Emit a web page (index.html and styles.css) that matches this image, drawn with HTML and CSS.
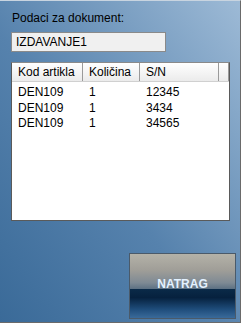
FILE: index.html
```html
<!doctype html>
<html lang="hr">
<head>
  <meta charset="utf-8">
  <title>Podaci za dokument</title>
  <link rel="stylesheet" href="styles.css">
</head>
<body>
  <div class="frame">
    <div class="screen">
      <p class="caption">Podaci za dokument:</p>
      <div class="docfield">IZDAVANJE1</div>
      <div class="list">
        <div class="list-head">
          <div class="col col-code">Kod artikla</div>
          <div class="col col-qty">Količina</div>
          <div class="col col-sn">S/N</div>
          <div class="col col-rest"></div>
        </div>
        <div class="list-row">
          <div class="col col-code">DEN109</div>
          <div class="col col-qty">1</div>
          <div class="col col-sn">12345</div>
        </div>
        <div class="list-row">
          <div class="col col-code">DEN109</div>
          <div class="col col-qty">1</div>
          <div class="col col-sn">3434</div>
        </div>
        <div class="list-row">
          <div class="col col-code">DEN109</div>
          <div class="col col-qty">1</div>
          <div class="col col-sn">34565</div>
        </div>
      </div>
      <div class="actions">
        <button class="back">NATRAG</button>
      </div>
    </div>
  </div>
</body>
</html>
```

FILE: styles.css
```css
html, body {
  margin: 0;
  padding: 0;
  background: #ffffff;
}

.frame {
  width: 243px;
  height: 325px;
  box-sizing: border-box;
  padding: 0 2px 2px 0;
  background: #ffffff;
}

.screen {
  height: 100%;
  box-sizing: border-box;
  border-top: 1px solid #c8d4e0;
  border-right: 1px solid #6a6a6a;
  border-bottom: 1px solid #6a6a6a;
  background: linear-gradient(to top right, #3a6a98 0%, #5682ad 45%, #9dbad6 100%);
  padding: 10px 0 0 11px;
  font-family: "Liberation Sans", Arial, sans-serif;
  font-size: 12px;
  color: #000;
  display: flex;
  flex-direction: column;
}

.caption {
  margin: 0 0 7px 1px;
  line-height: 14px;
}

.docfield {
  width: 155px;
  height: 20px;
  box-sizing: border-box;
  border: 1px solid #8a8a8a;
  background: #f0f0f0;
  padding: 2px 4px;
  line-height: 15px;
}

.list {
  margin-top: 10px;
  width: 219px;
  height: 159px;
  box-sizing: border-box;
  background: #ffffff;
  border: 1px solid #5a5a5a;
  border-top-color: #8a8a8a;
}

.list-head {
  display: flex;
  height: 18px;
  background: linear-gradient(#ffffff, #ebebeb);
  border-bottom: 1px solid #d0d0d0;
  margin-bottom: 3px;
}

.list-head .col {
  border-right: 1px solid #9a9a9a;
  line-height: 18px;
  padding-left: 6px;
}

.list-row {
  display: flex;
  height: 15.5px;
  line-height: 15.5px;
}

.list-row .col {
  padding-left: 6px;
}

.col {
  box-sizing: border-box;
  white-space: nowrap;
  overflow: hidden;
}

.col-code {
  width: 71px;
}

.col-qty {
  width: 57px;
}

.col-sn {
  width: 79px;
}

.col-rest {
  width: 10px;
}

.actions {
  display: flex;
  justify-content: flex-end;
  margin-top: 32px;
  padding-right: 4px;
}

.back {
  width: 107px;
  height: 66px;
  border: 1px solid #4a5a6a;
  color: #e4f2ff;
  font-family: "Liberation Sans", Arial, sans-serif;
  font-weight: bold;
  font-size: 12px;
  padding: 0 0 5px 0;
  background: linear-gradient(#b4b2a8 0%, #a09e98 25%, #7e8a94 45%, #5e7284 54%, #0a2a48 55%, #06213e 68%, #1e4c7a 86%, #3a6a9a 100%);
}
```
